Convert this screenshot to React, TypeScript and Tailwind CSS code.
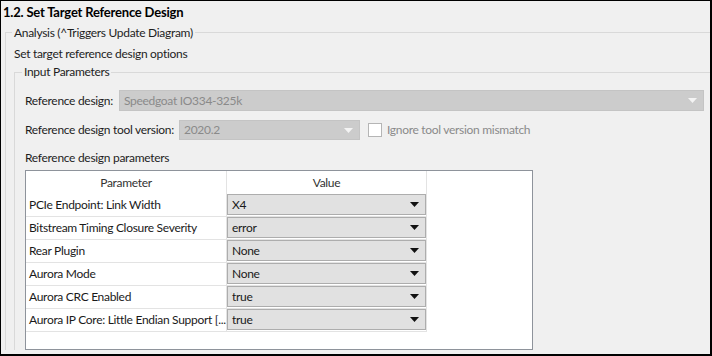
const rows: [string, string][] = [
  ["PCIe Endpoint: Link Width", "X4"],
  ["Bitstream Timing Closure Severity", "error"],
  ["Rear Plugin", "None"],
  ["Aurora Mode", "None"],
  ["Aurora CRC Enabled", "true"],
  ["Aurora IP Core: Little Endian Support [...", "true"],
];

function Arrow({ color }: { color: string }) {
  return (
    <svg width="9" height="5" viewBox="0 0 9 5" className="shrink-0">
      <path d="M0 0 H9 L4.5 5 Z" fill={color} />
    </svg>
  );
}

function Dropdown({ value }: { value: string }) {
  return (
    <div className="flex h-[21px] w-full items-center justify-between border border-[#adadad] bg-[#e1e1e1] pl-[4px] pr-[6px] text-[#1a1a1a]">
      <span>{value}</span>
      <Arrow color="#111" />
    </div>
  );
}

function DisabledSelect({ value, className }: { value: string; className: string }) {
  return (
    <div className={`flex items-center justify-between border border-[#c4c4c4] bg-[#cccccc] pl-[4px] pr-[6px] text-[#8a8a8a] ${className}`}>
      <span>{value}</span>
      <Arrow color="#f4f4f4" />
    </div>
  );
}

export default function App() {
  return (
    <div className="h-[356px] w-[712px] overflow-hidden whitespace-nowrap border-t border-l border-r-2 border-b-2 border-black bg-[#f0f0f0] font-['Lato',sans-serif] text-[12px] leading-[16px] tracking-[-0.3px] text-[#1e1e1e]">
      <div className="h-[22px] pl-[2px] pt-[3px] text-[13px] font-bold tracking-[-0.2px] text-black">1.2. Set Target Reference Design</div>

      <fieldset className="ml-[4px] min-w-0 border-t border-l border-r-0 border-b-0 border-[#d9d9d9] p-0">
        <legend className="ml-[6px] px-[2px] pt-[2px]">Analysis (^Triggers Update Diagram)</legend>
        <div className="mt-[5px] h-[16px] pl-[8px]">Set target reference design options</div>

        <fieldset className="ml-[8px] mt-[2px] min-w-0 border-t border-l border-r-0 border-b-0 border-[#d9d9d9] p-0">
          <legend className="ml-[7px] px-[2px]">Input Parameters</legend>

          <div className="mt-[10px] flex h-[21px] items-center pl-[10px] pr-[6px]">
            <span className="w-[94px] shrink-0">Reference design:</span>
            <DisabledSelect value="Speedgoat IO334-325k" className="h-[21px] flex-1" />
          </div>

          <div className="mt-[9px] flex h-[20px] items-center pl-[10px]">
            <span className="w-[154px] shrink-0">Reference design tool version:</span>
            <DisabledSelect value="2020.2" className="h-[20px] w-[181px]" />
            <div className="ml-[8px] h-[14px] w-[14px] border border-[#b5b5b5] bg-white" />
            <span className="ml-[5px] text-[#8a8a8a]">Ignore tool version mismatch</span>
          </div>

          <div className="mt-[10px] h-[16px] pl-[10px]">Reference design parameters</div>

          <div className="ml-[10px] mt-[4px] h-[180px] w-[508px] border border-[#8e939b] bg-white">
            <div className="flex h-[23px]">
              <div className="flex w-[201px] items-center justify-center border-r border-[#e3e3e3] text-[#333]">Parameter</div>
              <div className="flex w-[200px] items-center justify-center border-r border-[#e3e3e3] text-[#333]">Value</div>
            </div>
            {rows.map(([name, value]) => (
              <div key={name} className="flex h-[23px]">
                <div className="flex w-[201px] items-center overflow-hidden border-r border-b border-[#e3e3e3] pl-[3px] text-[#1a1a1a]">
                  {name}
                </div>
                <div className="flex w-[200px] items-start border-r border-b border-[#e3e3e3]">
                  <Dropdown value={value} />
                </div>
              </div>
            ))}
          </div>
        </fieldset>
      </fieldset>
    </div>
  );
}
